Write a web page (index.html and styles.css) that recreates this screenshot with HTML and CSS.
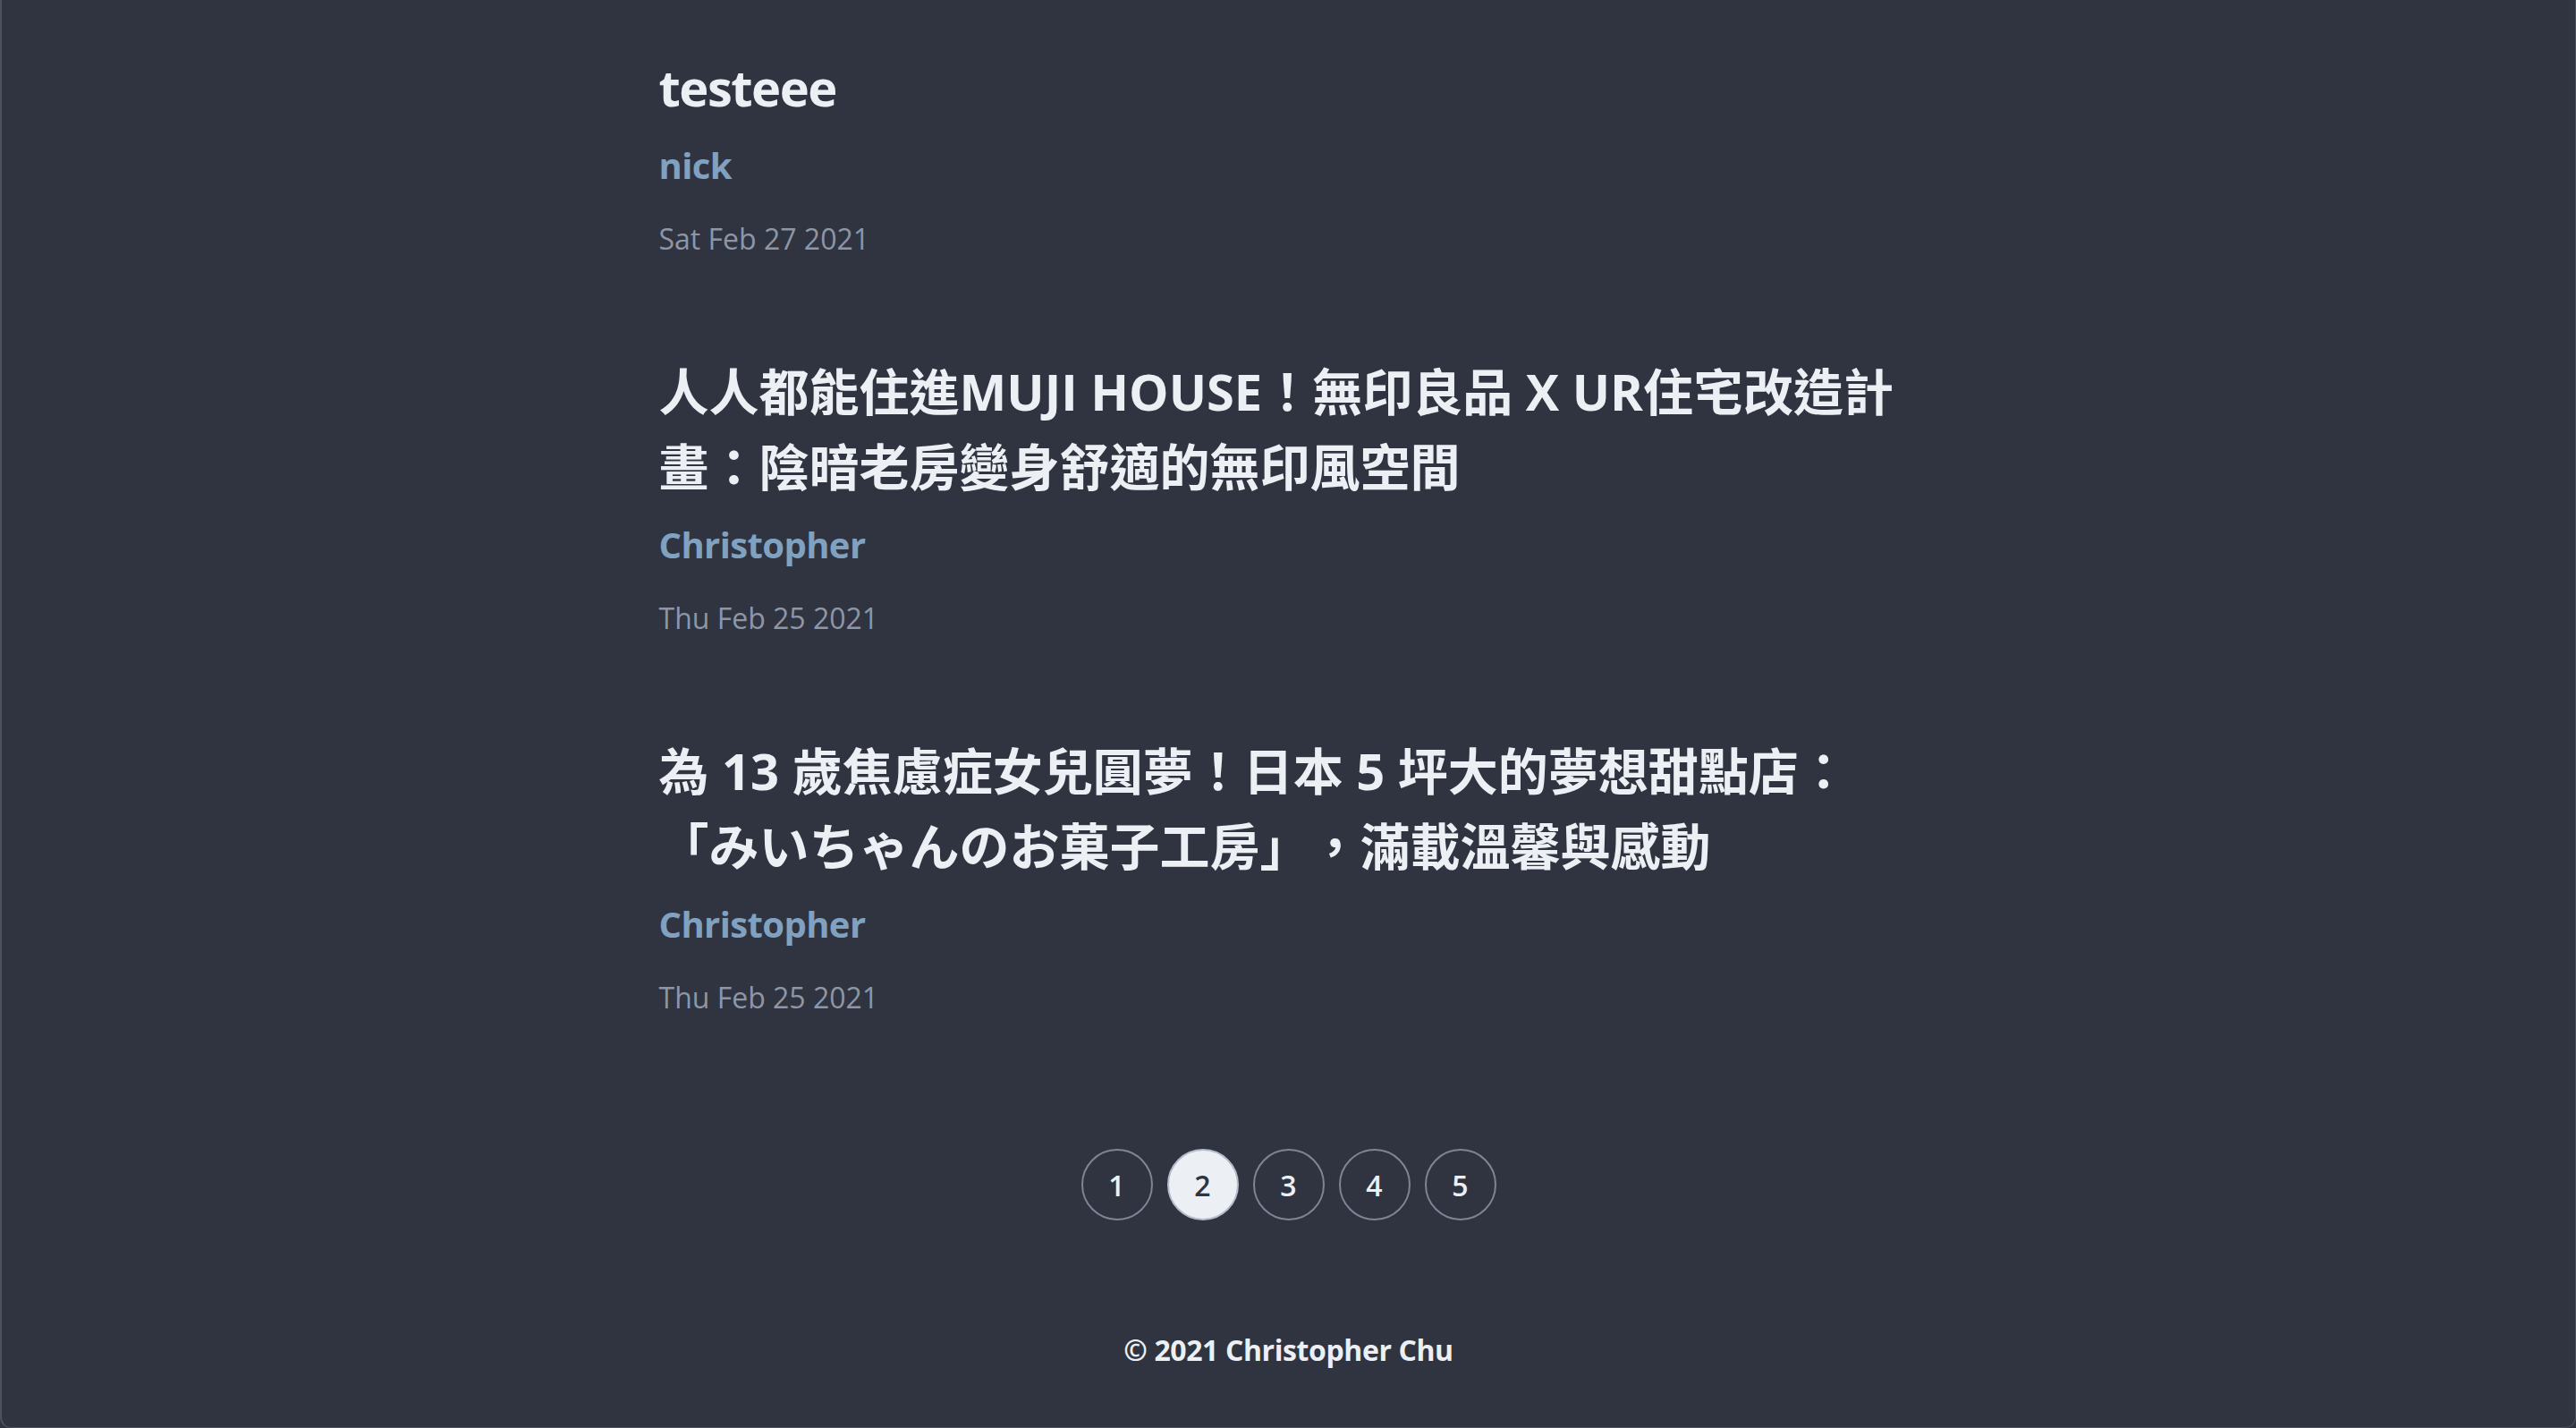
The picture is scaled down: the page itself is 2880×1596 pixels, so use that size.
FILE: index.html
```html
<!DOCTYPE html>
<html lang="zh-Hant">
<head>
<meta charset="utf-8">
<title>Blog</title>
<link rel="stylesheet" href="styles.css">
</head>
<body>
<div class="window">
  <main class="content">
    <article class="post">
      <h2 class="post-title post-title-latin">testeee</h2>
      <p class="post-author">nick</p>
      <p class="post-date">Sat Feb 27 2021</p>
    </article>
    <article class="post">
      <h2 class="post-title">人人都能住進MUJI HOUSE！無印良品 X UR住宅改造計畫：陰暗老房變身舒適的無印風空間</h2>
      <p class="post-author">Christopher</p>
      <p class="post-date">Thu Feb 25 2021</p>
    </article>
    <article class="post">
      <h2 class="post-title">為 13 歲焦慮症女兒圓夢！日本 5 坪大的夢想甜點店：「みいちゃんのお菓子工房」，滿載溫馨與感動</h2>
      <p class="post-author">Christopher</p>
      <p class="post-date">Thu Feb 25 2021</p>
    </article>
    <nav class="pagination">
      <a class="page">1</a>
      <a class="page page-active">2</a>
      <a class="page">3</a>
      <a class="page">4</a>
      <a class="page">5</a>
    </nav>
  </main>
  <footer class="footer">© 2021 Christopher Chu</footer>
</div>
</body>
</html>
```

FILE: styles.css
```css
html, body {
  margin: 0;
  padding: 0;
  background: #2f3440;
}
body {
  font-family: "Open Sans", "Noto Sans CJK TC", sans-serif;
  color: #eceff4;
}
.window {
  box-sizing: border-box;
  min-height: 100vh;
  background: #2f3440;
  border-left: 2px solid #4d5261;
  border-right: 1px solid #4d5261;
  border-bottom: 1px solid #4d5261;
  border-radius: 0 0 12px 12px;
  display: flex;
  flex-direction: column;
  padding-top: 55px;
}
.content {
  width: 1408px;
  margin: 0 auto;
}
.post {
  margin-bottom: 104px;
}
.post:last-of-type {
  margin-bottom: 0;
}
.post-title {
  margin: 0 0 16px;
  font-size: 56px;
  line-height: 84px;
  font-weight: 700;
  color: #eceff4;
  text-spacing-trim: space-all;
}
.post-title-latin {
  letter-spacing: -1.5px;
}
.post-author {
  margin: 0 0 28px;
  font-size: 40px;
  line-height: 60px;
  font-weight: 700;
  letter-spacing: -0.6px;
  color: #81a1c1;
}
.post-date {
  margin: 0;
  font-size: 32px;
  line-height: 48px;
  color: #8e96a6;
}
.pagination {
  margin-top: 145px;
  display: flex;
  justify-content: center;
  gap: 16px;
}
.page {
  box-sizing: border-box;
  width: 80px;
  height: 80px;
  border-radius: 50%;
  border: 2px solid #7d8597;
  display: flex;
  align-items: center;
  justify-content: center;
  font-size: 32px;
  font-weight: 600;
  color: #eceff4;
}
.page-active {
  background: #eceff4;
  border-color: #b4bccb;
  color: #2e3440;
}
.footer {
  margin-top: 121px;
  text-align: center;
  font-size: 32px;
  line-height: 48px;
  font-weight: 700;
  letter-spacing: -0.4px;
  color: #eceff4;
}
```
